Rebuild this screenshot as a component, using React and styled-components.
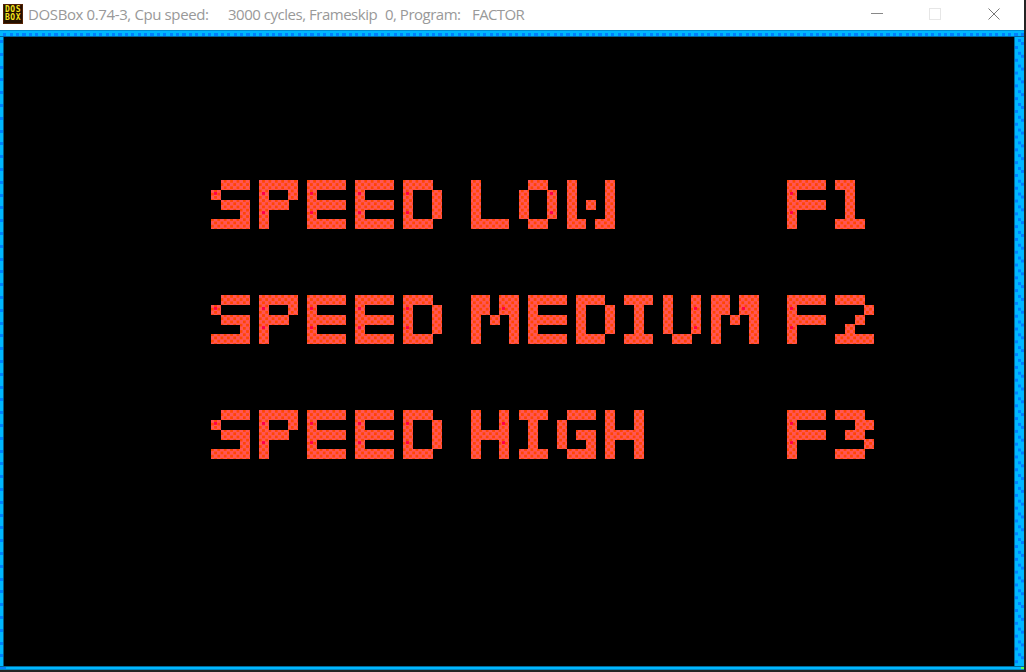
import React from "react";
import styled, { createGlobalStyle } from "styled-components";

const Global = createGlobalStyle`
  * { box-sizing: border-box; }
  body { margin: 0; background: #202124; overflow: hidden; }
`;

const Window = styled.div`
  display: flex;
  flex-direction: column;
  width: 1026px;
  height: 672px;
  padding: 0 2px 2px 0;
  background: #242424;
`;

const TitleBar = styled.header`
  display: flex;
  align-items: center;
  height: 30px;
  flex: none;
  padding-left: 3px;
  background: #fff;
`;

const AppIcon = styled.div`
  display: flex;
  flex-direction: column;
  justify-content: center;
  width: 20px;
  height: 20px;
  margin: -2px 5px 0 0;
  border: 1px solid #542204;
  background: #241000;
  color: #f3e01c;
  font: bold 8px/8px "DejaVu Sans Mono", monospace;
  text-align: center;
  letter-spacing: 0.5px;
`;

const Title = styled.div`
  display: flex;
  flex: 1;
  height: 30px;
  color: #999;
  font: 15px/29px "Open Sans", sans-serif;
  white-space: pre;
`;

const TitlePart = styled.span`
  width: ${(p) => p.$width}px;
  letter-spacing: ${(p) => p.$spacing}px;
`;

const Controls = styled.div`
  display: flex;
  align-items: center;
  height: 30px;
  gap: 46px;
  padding-right: 24px;
`;

const ControlIcon = styled.svg`
  display: block;
  width: 12px;
  height: 12px;
  margin-top: -2px;
  fill: none;
  stroke: ${(p) => p.$color};
  stroke-width: 1;
  &:nth-child(2) { margin-right: 1px; }
`;

const Frame = styled.main`
  display: grid;
  grid-template-rows: 7px 1fr 4px;
  grid-template-columns: 4px 1fr 10px;
  flex: 1;
  background: #00b7ff;
`;

const TopEdge = styled.div`
  grid-column: 1 / -1;
  border-top: 1px solid #008ed0;
  background: linear-gradient(#00b7ff 0 2px, transparent 2px 5px, #0063a0 5px),
    repeating-linear-gradient(90deg, #00b7ff 0 3.2px, #0080ff 3.2px 6.4px);
`;

const LeftEdge = styled.div`
  border-right: 1px solid #005b83;
  background: repeating-linear-gradient(#00b7ff 0 3px, #0080ff 3px 6px, #00b7ff 6px 12.8px);
`;

const RightEdge = styled.div`
  border-left: 1px solid #006b9b;
  background:
    conic-gradient(from 0deg at 3px 3px, transparent 75%, #0080ff 0) 0 9px / 12px 12.8px,
    conic-gradient(from 0deg at 3px 3px, transparent 75%, #0080ff 0) 3px 2px / 12px 12.8px,
    conic-gradient(from 0deg at 3px 3px, transparent 75%, #0080ff 0) 6px 5px / 12px 12.8px,
    #00b7ff;
`;

const BottomEdge = styled.div`
  grid-column: 1 / -1;
  border-top: 1px solid #006b9b;
  border-bottom: 1px solid #008bc4;
  background: linear-gradient(90deg, #0080ff 6px, transparent 6px 1021px, #55ff55 1021px);
`;

const FilterDefs = styled.svg`
  position: absolute;
  width: 0;
  height: 0;
`;

const Screen = styled.section`
  display: flex;
  flex-direction: column;
  gap: 65px;
  padding: 143px 0 0 207px;
  background: #000;
`;

/* The dither is multiplied over white lettering, so the black stays black. */
const MenuRow = styled.div`
  position: relative;
  isolation: isolate;
  width: 672px;
  height: 50px;
  background: #000;

  &::after {
    content: "";
    position: absolute;
    inset: 0;
    mix-blend-mode: multiply;
    background:
      conic-gradient(from 0deg at 3px 3px, transparent 75%, #ff0048 0) 3px 12px / 48px 19.2px,
      conic-gradient(from 0deg at 2.7px 2.7px, transparent 75%, #ff4600 0) 0 0 / 6.4px 6.4px,
      conic-gradient(from 0deg at 2.7px 2.7px, transparent 75%, #ff4600 0) 3.2px 3.2px / 6.4px 6.4px,
      #ff5555;
  }
`;

/* Grows every sampled dot into a 10px block. */
const Blocks = styled.div`
  height: 48px;
  filter: url(#blocks);
`;

const stops = "#0000 4px, #000 4px 5px, #0000 5px 14px, #000 14px 15px, #0000 15px 24px, #000 24px 25px, #0000 25px 33px, #000 33px 34px, #0000 34px 43px, #000 43px 44px, #0000 44px";

/* Keeps one dot of the lettering per 9.6px cell. */
const Samples = styled.div`
  display: grid;
  grid-template-columns: 259px 317px 96px;
  height: 48px;
  mask-image: linear-gradient(90deg, ${stops}), linear-gradient(${stops});
  mask-size: 48px 48px;
  mask-composite: intersect;
`;

const Word = styled.span`
  display: flex;
  color: #fff;
  font: bold 66px/66px "DejaVu Sans Mono", monospace;
`;

const Glyph = styled.span`
  display: block;
  flex: none;
  width: ${(p) => (p.$cells + 1) * 9.6}px;
  height: 66px;
  margin-top: -8px;
  font-weight: ${(p) => p.$weight};
  transform: translate(${(p) => (-p.$bearing * p.$cells * 9.6) / p.$ink}px, ${(p) => p.$drop}px)
    scale(${(p) => (1.15 * p.$cells * 9.6) / p.$ink}, ${(p) => p.$tall});
  transform-origin: 0 32px;
`;

/* cells wide, left bearing, ink width, drop, vertical scale, weight */
const metrics = {
  S: [4, 2, 39, 0.5, 0.94], P: [4, 6, 38], E: [4, 5.5, 37], D: [4, 3.5, 39], L: [4, 8, 36],
  O: [4, 4, 38, 0.8, 0.95], W: [5, 1, 44, 6, 1.25], M: [5, 3.9, 38, 0, 1, 400], I: [3, 6, 35],
  U: [4, 3.5, 38, -3], H: [4, 5, 37], G: [4, 3, 39, 0.8, 0.95], F: [4, 6, 36],
  1: [3, 7, 36, 3], 2: [4, 1, 40, 2.5], 3: [4, 2.6, 40.5, 0.8, 0.94],
};

function PixelWord({ children }) {
  return (
    <Word>
      {[...children].map((c, i) => {
        const [cells, bearing, ink, drop = 0, tall = 1, weight = 700] = metrics[c];
        return (
          <Glyph key={i} $cells={cells} $bearing={bearing} $ink={ink} $drop={drop} $tall={tall} $weight={weight}>
            {c}
          </Glyph>
        );
      })}
    </Word>
  );
}

const rows = [
  { speed: "LOW", hotkey: "F1" },
  { speed: "MEDIUM", hotkey: "F2" },
  { speed: "HIGH", hotkey: "F3" },
];

export default function App() {
  return (
    <>
      <Global />
      <FilterDefs aria-hidden="true">
        <filter id="blocks" filterUnits="userSpaceOnUse" x="-4" y="-4" width="690" height="58">
          <feComponentTransfer>
            <feFuncA type="linear" slope="40" intercept="-16" />
          </feComponentTransfer>
          <feMorphology operator="dilate" radius="4" result="a" />
          <feOffset in="a" dx="1" dy="0" result="b" />
          <feMerge result="c"><feMergeNode in="a" /><feMergeNode in="b" /></feMerge>
          <feOffset in="c" dx="0" dy="1" result="d" />
          <feMerge><feMergeNode in="c" /><feMergeNode in="d" /></feMerge>
        </filter>
      </FilterDefs>
      <Window>
        <TitleBar>
          <AppIcon><span>DOS</span><span>BOX</span></AppIcon>
          <Title>
            <TitlePart $width={200} $spacing={-0.38}>DOSBox 0.74-3, Cpu speed:</TitlePart>
            <TitlePart $width={157} $spacing={-0.48}>3000 cycles, Frameskip</TitlePart>
            <TitlePart $width={87} $spacing={-0.5}>0, Program:</TitlePart>
            <TitlePart $width={70} $spacing={-0.6}>FACTOR</TitlePart>
          </Title>
          <Controls>
            <ControlIcon $color="#888"><path d="M0 5.5H12" /></ControlIcon>
            <ControlIcon $color="#e6e6e6"><rect x=".5" y=".5" width="11" height="11" /></ControlIcon>
            <ControlIcon $color="#777"><path d="M.5.5l11 11M11.5.5l-11 11" /></ControlIcon>
          </Controls>
        </TitleBar>
        <Frame>
          <TopEdge />
          <LeftEdge />
          <Screen>
            {rows.map((row) => (
              <MenuRow key={row.hotkey}>
                <Blocks>
                  <Samples>
                    <PixelWord>SPEED</PixelWord>
                    <PixelWord>{row.speed}</PixelWord>
                    <PixelWord>{row.hotkey}</PixelWord>
                  </Samples>
                </Blocks>
              </MenuRow>
            ))}
          </Screen>
          <RightEdge />
          <BottomEdge />
        </Frame>
      </Window>
    </>
  );
}
